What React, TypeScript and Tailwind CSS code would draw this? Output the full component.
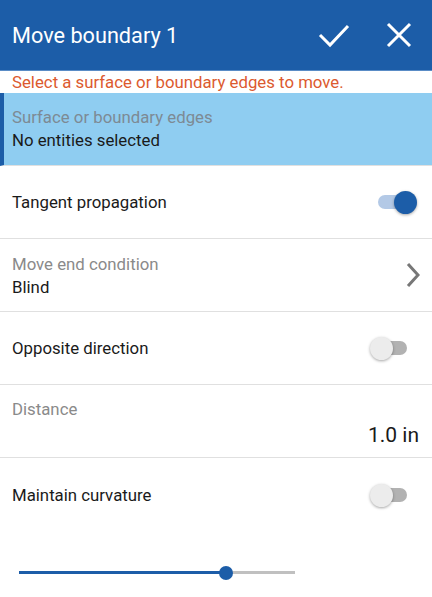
import React from "react";

function Toggle({ on }: { on: boolean }) {
  return (
    <div className="relative w-[48px] h-[26px]">
      <div
        className={
          "absolute top-[6px] left-[8px] h-[14px] rounded-full " +
          (on ? "w-[34px] bg-[#b3c9e6]" : "w-[31px] bg-[#b2b2b2]")
        }
      />
      <div
        className={
          "absolute top-[2px] w-[23px] h-[23px] rounded-full shadow-[0_1px_3px_rgba(0,0,0,0.35)] " +
          (on ? "left-[24px] bg-[#1c5da8]" : "left-[2px] bg-[#ececec]")
        }
      />
    </div>
  );
}

export default function App() {
  return (
    <div
      className="w-[432px] h-[597px] bg-white overflow-hidden"
      style={{ fontFamily: "Roboto, 'Liberation Sans', sans-serif" }}
    >
      <div className="h-[70px] bg-[#1c5da8] flex items-center pl-[12px] pr-[20px]">
        <div className="text-white text-[21.7px] flex-1 leading-none pt-[1px]">Move boundary 1</div>
        <svg width="32" height="26" viewBox="0 0 32 26" className="mr-[36px]">
          <path d="M2 13 L12 23 L30 4" stroke="white" strokeWidth="3" fill="none" />
        </svg>
        <svg width="26" height="26" viewBox="0 0 26 26">
          <path d="M2 2 L24 24 M24 2 L2 24" stroke="white" strokeWidth="3" fill="none" />
        </svg>
      </div>
      <div className="h-[1px] bg-[#5a8cc6]" />
      <div className="h-[22px] pl-[12px] text-[16.8px] leading-[22px] text-[#dc5a2f]">
        Select a surface or boundary edges to move.
      </div>
      <div className="h-[73px] bg-[#8fcdf1] border-l-[4px] border-[#1c5da8] pl-[8px] pt-[13px] border-b border-b-[#e0e0e0]">
        <div className="text-[16.8px] leading-[23px] text-[#7d8a94]">Surface or boundary edges</div>
        <div className="text-[16.8px] leading-[23px] text-[#1a1a1a]">No entities selected</div>
      </div>
      <div className="h-[73px] flex items-center pl-[12px] pr-[14px] border-b border-[#e0e0e0]">
        <div className="flex-1 text-[16.8px] text-[#1a1a1a] pt-[2px]">Tangent propagation</div>
        <Toggle on={true} />
      </div>
      <div className="h-[73px] flex items-center pl-[12px] pr-[12px] border-b border-[#e0e0e0]">
        <div className="flex-1 pt-[2px]">
          <div className="text-[16.8px] leading-[23px] text-[#8a8a8a]">Move end condition</div>
          <div className="text-[16.8px] leading-[23px] text-[#1a1a1a]">Blind</div>
        </div>
        <svg width="14" height="26" viewBox="0 0 14 26">
          <path d="M2 2 L12 13 L2 24" stroke="#777" strokeWidth="3" fill="none" />
        </svg>
      </div>
      <div className="h-[73px] flex items-center pl-[12px] pr-[16px] border-b border-[#e0e0e0]">
        <div className="flex-1 text-[16.8px] text-[#1a1a1a] pt-[2px]">Opposite direction</div>
        <Toggle on={false} />
      </div>
      <div className="h-[73px] pl-[12px] pr-[13px] pt-[13px] border-b border-[#e0e0e0]">
        <div className="text-[16.8px] leading-[23px] text-[#8a8a8a]">Distance</div>
        <div className="text-[21px] leading-[28px] text-[#1a1a1a] text-right">1.0 in</div>
      </div>
      <div className="h-[73px] flex items-center pl-[12px] pr-[16px]">
        <div className="flex-1 text-[16.8px] text-[#1a1a1a] pt-[2px]">Maintain curvature</div>
        <Toggle on={false} />
      </div>
      <div className="pl-[19px] pt-[35px]">
        <div className="relative w-[276px] h-[14px]">
          <div className="absolute top-[5px] left-0 w-[207px] h-[3px] bg-[#1c5da8]" />
          <div className="absolute top-[5px] left-[207px] w-[69px] h-[3px] bg-[#c0c0c0]" />
          <div className="absolute top-0 left-[200px] w-[14px] h-[14px] rounded-full bg-[#1c5da8]" />
        </div>
      </div>
    </div>
  );
}
